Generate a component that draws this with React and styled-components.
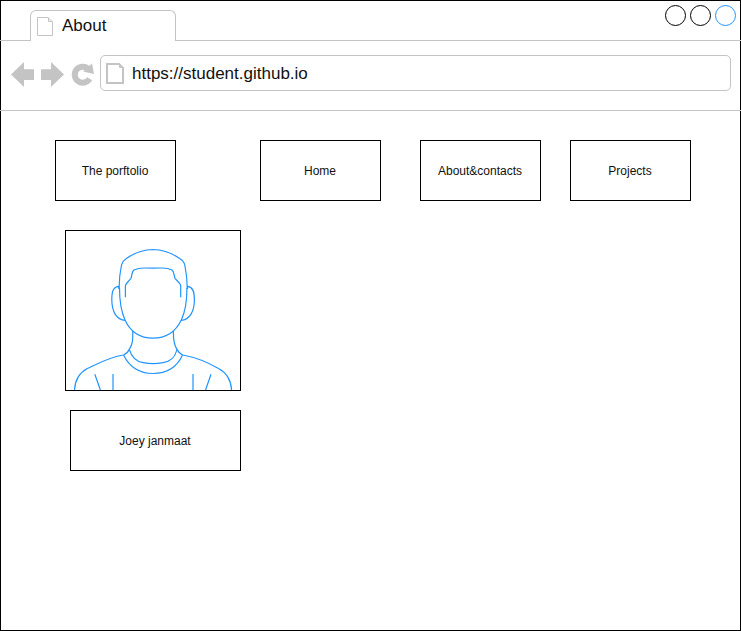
import React from "react";
import styled, { createGlobalStyle } from "styled-components";

const GlobalStyle = createGlobalStyle`
  * { box-sizing: border-box; }
  body { margin: 0; background: #fff; font-family: "Liberation Sans", Arial, sans-serif; color: #111; }
`;

const Window = styled.div`
  width: 741px;
  height: 631px;
  border: 1px solid #000;
  background: #fff;
`;

const TabStrip = styled.header`
  display: flex;
  justify-content: space-between;
  height: 40px;
  margin: 0 -1px;
  padding: 0 5px 0 30px;
  border-bottom: 1px solid #c4c4c4;
`;

const Tab = styled.div`
  display: flex;
  align-items: flex-start;
  width: 146px;
  height: 31px;
  margin-top: 9px;
  padding: 5px 0 0 6px;
  gap: 9px;
  border: 1px solid #c4c4c4;
  border-bottom: 0;
  border-radius: 6px 6px 0 0;
  background: #fff;
  font-size: 17px;
  line-height: 20px;

  svg { margin-top: 1px; }
`;

const WindowControls = styled.div`
  display: flex;
  gap: 4px;
  padding-top: 4px;
`;

const Control = styled.span`
  width: 21px;
  height: 21px;
  border: 1px solid ${(p) => p.$color};
  border-radius: 50%;
`;

const Toolbar = styled.div`
  display: flex;
  align-items: flex-start;
  height: 70px;
  margin: 0 -1px;
  padding: 14px 10px 0;
  border-bottom: 1px solid #c4c4c4;
`;

const NavIcons = styled.svg`
  display: block;
  width: 90px;
  height: 40px;
  flex: none;
`;

const AddressBar = styled.div`
  display: flex;
  align-items: flex-start;
  flex: 1;
  height: 36px;
  padding: 7px 0 0 5px;
  gap: 8px;
  border: 1px solid #c4c4c4;
  border-radius: 5px;
  font-size: 17px;
  line-height: 22px;
`;

const Icon = styled.svg`
  display: block;
  flex: none;
`;

const Content = styled.main`
  padding: 29px 0 0 54px;
`;

const Menu = styled.nav`
  display: flex;
  justify-content: space-between;
  width: 431px;
`;

const Masthead = styled.div`
  display: flex;
  gap: 84px;
`;

const MenuLinks = styled(Menu)`
  display: grid;
  grid-template-columns: 160px 150px 121px;
`;

const Box = styled.div`
  display: flex;
  align-items: center;
  justify-content: center;
  width: ${(p) => p.$width || 121}px;
  height: 61px;
  padding-right: 1px;
  border: 1px solid #000;
  font-size: 12px;
  line-height: 14px;
`;

const Profile = styled.section`
  display: flex;
  flex-direction: column;
  align-items: flex-end;
  width: 186px;
  margin-top: 29px;
  gap: 19px;
`;

const Portrait = styled.div`
  width: 176px;
  height: 161px;
  border: 1px solid #000;
`;

function PageIcon({ width, height, stroke }) {
  const s = stroke / 2;
  return (
    <Icon width={width} height={height} viewBox={`0 0 ${width} ${height}`} fill="none" stroke="#c4c4c4" strokeWidth={stroke}>
      <path d={`M${s} ${s}H${width - 5}L${width - s} 5V${height - s}H${s}Z`} />
      <path d={`M${width - 4.5} ${s}V4.5H${width - s}`} strokeWidth="1" />
    </Icon>
  );
}

function Person() {
  return (
    <Icon width="174" height="159" viewBox="66 231 174 159" fill="none" stroke="#2194ff" strokeWidth="1.2">
      <path d="M119.3 289C118.8 280 120.5 270 121.5 265Q122.5 261 126 258.7Q138 250 153 249.5Q168 250 180 258.7Q184 261 184.8 265C186 271 187.3 280 187.3 289" />
      <path d="M119.5 288C119.5 299 120.5 310 125 320C131 333 142 338.2 153 338.2C164 338.2 175 333 181.3 320C186 310 187 299 186.9 288" />
      <path d="M119 289L118.5 286.3C112.5 287 111.8 293 111.8 300C112 311 116 320 125.3 320.3M187.3 289L187.7 286.3C193.6 287 194.4 293 194.4 300C194.3 311 190 320 181 320.3" />
      <path d="M125.4 297.3V286Q125.5 284.8 127 283L131 278.3C132 276 131.5 271.6 134 270Q138.5 267.8 145 268Q153 268.2 161 268Q168 267.8 172 270C174.5 271.6 173.5 275 175 278.3L179.3 283Q180.7 284.8 180.7 286V297.3" />
      <path d="M132.7 330.7C133 340 132.6 344.5 129.3 349.3Q127.5 353.5 123.5 355C110 356.8 96 364.5 87.3 368.5C79 373 75 380 74.5 390M173.4 330.7C173.1 340 173.8 344.5 177 349.3Q179 353.5 182.8 355C196 357.5 210 363.5 218.5 368.5C227 373 231 380 231.6 390" />
      <path d="M129.3 349.3C132 358.5 137 361.5 143 362.7Q153 364.7 163 362.7C170 361.5 174.8 358.5 177 349.3" />
      <path d="M123.5 355C129 366 139 373.5 153 373.5C168 373.5 177.5 366 182.5 355" />
      <path d="M94.8 374.3L100.4 390M113 374V390M193 374V390M211 374.3L205.6 390" />
    </Icon>
  );
}

export default function App() {
  return (
    <>
      <GlobalStyle />
      <Window>
        <TabStrip>
          <Tab>
            <PageIcon width={16} height={19} stroke={1} />
            <span>About</span>
          </Tab>
          <WindowControls>
            <Control $color="#000" />
            <Control $color="#000" />
            <Control $color="#2194ff" />
          </WindowControls>
        </TabStrip>
        <Toolbar>
          <NavIcons viewBox="10 55 90 40" fill="#c4c4c4">
            <path d="M11 74.5L24 62V69.2H34V80H24V87Z" />
            <path d="M64 74.5L51 62V69.2H41V80H51V87Z" />
            <path d="M89.6 78.8A8 8 0 1 1 88.6 69.2" fill="none" stroke="#c4c4c4" strokeWidth="6" />
            <path d="M92 63.5L94 74L83 71.5Z" />
          </NavIcons>
          <AddressBar>
            <PageIcon width={18} height={21} stroke={2} />
            <span>https://student.github.io</span>
          </AddressBar>
        </Toolbar>
        <Content>
          <Masthead>
            <Box>The porftolio</Box>
            <MenuLinks>
              <Box>Home</Box>
              <Box>About&amp;contacts</Box>
              <Box>Projects</Box>
            </MenuLinks>
          </Masthead>
          <Profile>
            <Portrait>
              <Person />
            </Portrait>
            <Box $width={171}>Joey janmaat</Box>
          </Profile>
        </Content>
      </Window>
    </>
  );
}
